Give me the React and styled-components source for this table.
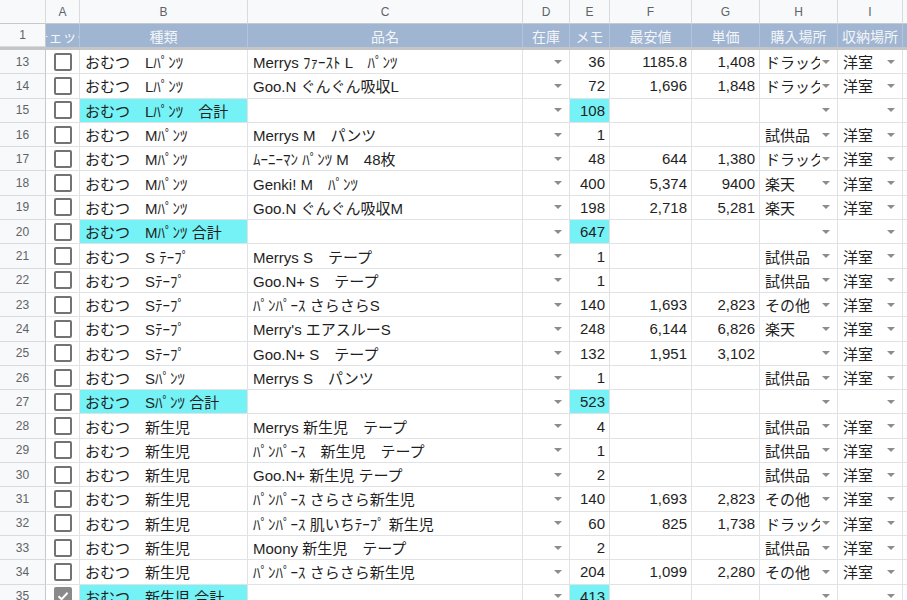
import React from "react";
import styled, { createGlobalStyle } from "styled-components";

const GlobalStyle = createGlobalStyle`
  html, body {
    margin: 0;
    padding: 0;
    background: #fff;
    overflow: hidden;
  }
  * { box-sizing: border-box; }
`;

const COLS = "46px 34px 168px 275px 47px 40px 82px 68px 78px 65px 60px";
const FONT = `"Liberation Sans", "Noto Sans CJK JP", sans-serif`;

const Sheet = styled.div`
  width: 907px;
  height: 600px;
  overflow: hidden;
  font-family: ${FONT};
  color: #1f1f1f;
`;

const Row = styled.div`
  display: grid;
  grid-template-columns: ${COLS};
  height: ${(p) => p.$h}px;
`;

const ColHead = styled.div`
  background: #f8f9fa;
  border-right: 1px solid #d9dadb;
  border-bottom: 1px solid #c7c8c9;
  color: #5f6368;
  font-size: 12px;
  display: flex;
  align-items: center;
  justify-content: center;
`;

const RowNum = styled.div`
  background: #f8f9fa;
  border-right: 1px solid #c7c8c9;
  border-bottom: 1px solid #d9dadb;
  color: #5f6368;
  font-size: 12px;
  display: flex;
  align-items: center;
  justify-content: center;
`;

const HeadCell = styled.div`
  background: #a0b5d1;
  border-right: 1px solid #b4c5db;
  color: rgba(255, 255, 255, 0.9);
  font-size: 14px;
  display: flex;
  align-items: center;
  justify-content: center;
  overflow: hidden;
  white-space: nowrap;
`;

const Divider = styled.div`
  height: 3px;
  background: #c4c5c6;
`;

const Cell = styled.div`
  border-right: 1px solid #e1e2e3;
  border-bottom: 1px solid #e1e2e3;
  background: ${(p) => (p.$hl ? "#74f2f5" : "#fff")};
  font-size: 15px;
  display: flex;
  align-items: center;
  justify-content: ${(p) => (p.$right ? "flex-end" : "flex-start")};
  padding: 0 4px 0 5px;
  white-space: nowrap;
  overflow: hidden;
  min-width: 0;
`;

const DropCell = styled(Cell)`
  justify-content: space-between;
  gap: 2px;
  padding-right: 7px;
`;

const DropText = styled.span`
  overflow: hidden;
  flex: 1;
  min-width: 0;
`;

const Arrow = styled.span`
  flex: none;
  width: 0;
  height: 0;
  border-left: 4px solid transparent;
  border-right: 4px solid transparent;
  border-top: 4px solid #8c8c8c;
`;

const CheckCell = styled(Cell)`
  justify-content: center;
  padding: 0;
`;

const Box = styled.span`
  width: 18px;
  height: 18px;
  border: 2px solid ${(p) => (p.$on ? "#8a8a8a" : "#737373")};
  border-radius: 2px;
  background: ${(p) => (p.$on ? "#8a8a8a" : "#fff")};
  display: flex;
  align-items: center;
  justify-content: center;
`;

const Check = ({ on }) => (
  <CheckCell>
    <Box $on={on}>
      {on && (
        <svg width="14" height="14" viewBox="0 0 14 14">
          <path d="M2.5 7.2 L5.6 10.2 L11.6 3.8" stroke="#fff" strokeWidth="2" fill="none" />
        </svg>
      )}
    </Box>
  </CheckCell>
);

const Drop = ({ text, hl }) => (
  <DropCell $hl={hl}>
    <DropText>{text}</DropText>
    <Arrow />
  </DropCell>
);

const D = "ドラッグストア";
const rows = [
  [13, "おむつ　Lﾊﾟﾝﾂ", "Merrys ﾌｧｰｽﾄ L　ﾊﾟﾝﾂ", "36", "1185.8", "1,408", D, "洋室"],
  [14, "おむつ　Lﾊﾟﾝﾂ", "Goo.N ぐんぐん吸収L", "72", "1,696", "1,848", D, "洋室"],
  [15, "おむつ　Lﾊﾟﾝﾂ　合計", "", "108", "", "", "", "", true],
  [16, "おむつ　Mﾊﾟﾝﾂ", "Merrys M　パンツ", "1", "", "", "試供品", "洋室"],
  [17, "おむつ　Mﾊﾟﾝﾂ", "ﾑｰﾆｰﾏﾝ ﾊﾟﾝﾂ M　48枚", "48", "644", "1,380", D, "洋室"],
  [18, "おむつ　Mﾊﾟﾝﾂ", "Genki! M　ﾊﾟﾝﾂ", "400", "5,374", "9400", "楽天", "洋室"],
  [19, "おむつ　Mﾊﾟﾝﾂ", "Goo.N ぐんぐん吸収M", "198", "2,718", "5,281", "楽天", "洋室"],
  [20, "おむつ　Mﾊﾟﾝﾂ 合計", "", "647", "", "", "", "", true],
  [21, "おむつ　S ﾃｰﾌﾟ", "Merrys S　テープ", "1", "", "", "試供品", "洋室"],
  [22, "おむつ　Sﾃｰﾌﾟ", "Goo.N+ S　テープ", "1", "", "", "試供品", "洋室"],
  [23, "おむつ　Sﾃｰﾌﾟ", "ﾊﾟﾝﾊﾟｰｽ さらさらS", "140", "1,693", "2,823", "その他", "洋室"],
  [24, "おむつ　Sﾃｰﾌﾟ", "Merry's エアスルーS", "248", "6,144", "6,826", "楽天", "洋室"],
  [25, "おむつ　Sﾃｰﾌﾟ", "Goo.N+ S　テープ", "132", "1,951", "3,102", "", "洋室"],
  [26, "おむつ　Sﾊﾟﾝﾂ", "Merrys S　パンツ", "1", "", "", "試供品", "洋室"],
  [27, "おむつ　Sﾊﾟﾝﾂ 合計", "", "523", "", "", "", "", true],
  [28, "おむつ　新生児", "Merrys 新生児　テープ", "4", "", "", "試供品", "洋室"],
  [29, "おむつ　新生児", "ﾊﾟﾝﾊﾟｰｽ　新生児　テープ", "1", "", "", "試供品", "洋室"],
  [30, "おむつ　新生児", "Goo.N+ 新生児 テープ", "2", "", "", "試供品", "洋室"],
  [31, "おむつ　新生児", "ﾊﾟﾝﾊﾟｰｽ さらさら新生児", "140", "1,693", "2,823", "その他", "洋室"],
  [32, "おむつ　新生児", "ﾊﾟﾝﾊﾟｰｽ 肌いちﾃｰﾌﾟ 新生児", "60", "825", "1,738", D, "洋室"],
  [33, "おむつ　新生児", "Moony 新生児　テープ", "2", "", "", "試供品", "洋室"],
  [34, "おむつ　新生児", "ﾊﾟﾝﾊﾟｰｽ さらさら新生児", "204", "1,099", "2,280", "その他", "洋室"],
  [35, "おむつ　新生児 合計", "", "413", "", "", "", "", true, true],
];

const letters = ["", "A", "B", "C", "D", "E", "F", "G", "H", "I", ""];
const heads = ["チェック", "種類", "品名", "在庫", "メモ", "最安値", "単価", "購入場所", "収納場所", ""];

export default function App() {
  return (
    <Sheet>
      <GlobalStyle />
      <Row $h={24}>
        {letters.map((l, i) => (
          <ColHead key={i}>{l}</ColHead>
        ))}
      </Row>
      <Row $h={23}>
        <RowNum>1</RowNum>
        {heads.map((h, i) => (
          <HeadCell key={i}>{h}</HeadCell>
        ))}
      </Row>
      <Divider />
      {rows.map(([n, kind, name, memo, low, unit, shop, place, hl, checked]) => (
        <Row key={n} $h={24.3}>
          <RowNum>{n}</RowNum>
          <Check on={checked} />
          <Cell $hl={hl}>{kind}</Cell>
          <Cell>{name}</Cell>
          <Drop text="" />
          <Cell $right $hl={hl}>{memo}</Cell>
          <Cell $right>{low}</Cell>
          <Cell $right>{unit}</Cell>
          <Drop text={shop} />
          <Drop text={place} />
          <Cell />
        </Row>
      ))}
    </Sheet>
  );
}
